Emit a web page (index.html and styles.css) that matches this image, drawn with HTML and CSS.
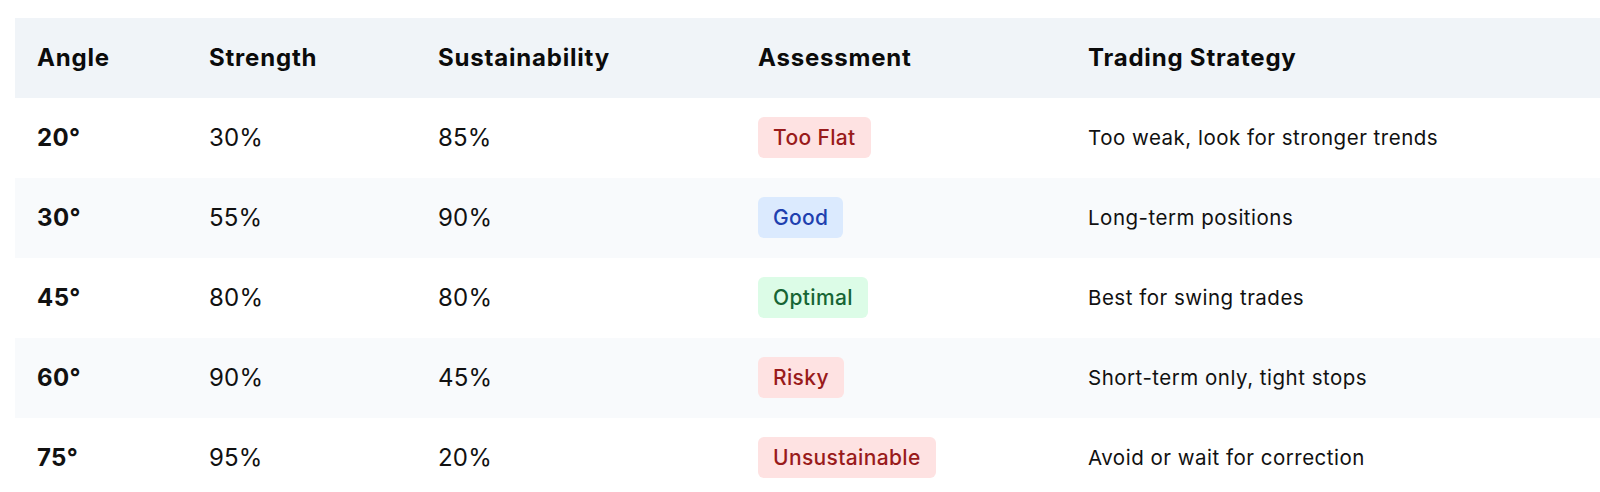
FILE: index.html
```html
<!DOCTYPE html>
<html lang="en">
<head>
<meta charset="utf-8">
<title>Trend Angle Table</title>
<link rel="stylesheet" href="styles.css">
</head>
<body>
<div class="wrap">
<table class="angles">
  <colgroup>
    <col class="c1"><col class="c2"><col class="c3"><col class="c4"><col class="c5">
  </colgroup>
  <thead>
    <tr><th>Angle</th><th>Strength</th><th>Sustainability</th><th>Assessment</th><th>Trading Strategy</th></tr>
  </thead>
  <tbody>
    <tr><td class="ang">20°</td><td>30%</td><td>85%</td><td><span class="badge red">Too Flat</span></td><td class="strat">Too weak, look for stronger trends</td></tr>
    <tr><td class="ang">30°</td><td>55%</td><td>90%</td><td><span class="badge blue">Good</span></td><td class="strat">Long-term positions</td></tr>
    <tr><td class="ang">45°</td><td>80%</td><td>80%</td><td><span class="badge green">Optimal</span></td><td class="strat">Best for swing trades</td></tr>
    <tr><td class="ang">60°</td><td>90%</td><td>45%</td><td><span class="badge red">Risky</span></td><td class="strat">Short-term only, tight stops</td></tr>
    <tr><td class="ang">75°</td><td>95%</td><td>20%</td><td><span class="badge red">Unsustainable</span></td><td class="strat">Avoid or wait for correction</td></tr>
  </tbody>
</table>
</div>
</body>
</html>
```
FILE: styles.css
```css
html, body {
  margin: 0;
  padding: 0;
  background: #ffffff;
}
body {
  font-family: Inter, "Noto Sans", "Liberation Sans", sans-serif;
  color: #111111;
  overflow: hidden;
}
.wrap {
  padding: 18px 0 0 15px;
}
.angles {
  width: 1585px;
  border-collapse: collapse;
  table-layout: fixed;
}
.c1 { width: 172px; }
.c2 { width: 229px; }
.c3 { width: 320px; }
.c4 { width: 330px; }
.angles th {
  background: #f0f4f8;
  height: 79.5px;
  padding: 0 22px;
  text-align: left;
  font-size: 24px;
  font-weight: 700;
  letter-spacing: 0.8px;
  color: #0b0b0b;
  box-sizing: border-box;
}
.angles td {
  height: 80px;
  padding: 0 22px;
  font-size: 24px;
  font-weight: 400;
  letter-spacing: 0.2px;
  box-sizing: border-box;
  vertical-align: middle;
}
.angles tbody tr:nth-child(even) td {
  background: #f8fafc;
}
.angles td.ang {
  font-weight: 700;
  letter-spacing: 0.4px;
}
.angles td.strat {
  font-size: 20.5px;
  letter-spacing: 0.5px;
}
.badge {
  display: inline-block;
  padding: 0 15px;
  height: 41px;
  line-height: 41px;
  border-radius: 6px;
  font-size: 21px;
  font-weight: 500;
  letter-spacing: 0.35px;
}
.badge.red { background: #fee2e2; color: #991b1b; }
.badge.blue { background: #dbeafe; color: #1e40af; }
.badge.green { background: #dcfce7; color: #166534; }
```
